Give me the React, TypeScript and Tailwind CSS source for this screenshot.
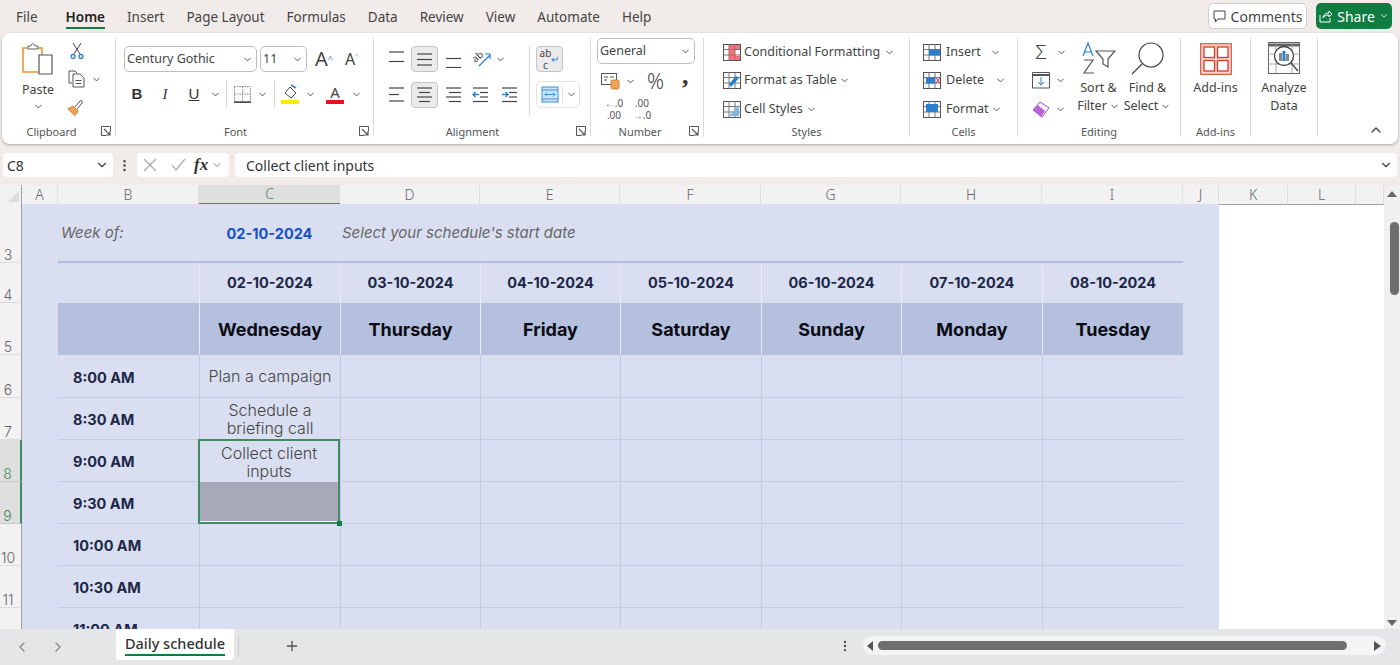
import type { ReactNode } from "react";
import { ChevronDown, ChevronLeft, ChevronRight, ChevronUp, MoreVertical, Plus } from "lucide-react";

const TABS = ["File", "Home", "Insert", "Page Layout", "Formulas", "Data", "Review", "View", "Automate", "Help"];
const DATES = ["02-10-2024", "03-10-2024", "04-10-2024", "05-10-2024", "06-10-2024", "07-10-2024", "08-10-2024"];
const DAYS = ["Wednesday", "Thursday", "Friday", "Saturday", "Sunday", "Monday", "Tuesday"];
const COLS = ["A", "B", "C", "D", "E", "F", "G", "H", "I", "J", "K", "L", ""];
const TIMES = [
  { row: 6, time: "8:00 AM", text: "Plan a campaign", h: "h-[43px]" },
  { row: 7, time: "8:30 AM", text: "Schedule a briefing call", h: "h-[42px]" },
  { row: 8, time: "9:00 AM", text: "", h: "h-[42px]" },
  { row: 9, time: "9:30 AM", text: "", h: "h-[42px]" },
  { row: 10, time: "10:00 AM", text: "", h: "h-[42px]" },
  { row: 11, time: "10:30 AM", text: "", h: "h-[42px]" },
  { row: 12, time: "11:00 AM", text: "", h: "h-[42px]" },
];

const gridCols =
  "grid grid-cols-[22px_36px_141px_141px_140px_140px_141px_140px_141px_141px_36px_69px_68px_28px]";
const gothic = "font-['Inter','Liberation_Sans',sans-serif]";

function Chev({ className = "" }: { className?: string }) {
  return <ChevronDown size={11} strokeWidth={2} className={`text-[#444] shrink-0 ${className}`} />;
}

function Launcher() {
  return (
    <svg width="10" height="10" viewBox="0 0 10 10" className="absolute right-[4px] bottom-[1px]" fill="none" stroke="#555">
      <path d="M9.5 5V.5H.5v9H5" />
      <path d="M3 3l5.5 5.5M9 5v4H5" strokeWidth="1.2" />
    </svg>
  );
}

function Group({ label, w, pad = "", children }: { label: string; w: string; pad?: string; children: ReactNode }) {
  return (
    <div className={`relative flex flex-col h-[99px] shrink-0 border-r border-[#dcdcdc] ${w}`}>
      <div className="h-[86px] shrink-0">{children}</div>
      <div className={`text-center text-[11px] leading-[16px] text-[#555] ${pad}`}>{label}</div>
    </div>
  );
}

function Lines({ rows, box = false, arrow }: { rows: string[]; box?: boolean; arrow?: string }) {
  return (
    <span className={`flex h-[26px] w-[27px] shrink-0 items-center justify-center rounded-[4px] ${box ? "border border-[#c4c4c4] bg-[#ebebeb]" : ""}`}>
      <svg width="17" height="17" viewBox="0 0 17 17" fill="none" stroke="#444" strokeWidth="1.2">
        {rows.map((d) => (
          <path key={d} d={d} />
        ))}
        {arrow && <path d={arrow} stroke="#2a7fd0" strokeWidth="1.4" />}
      </svg>
    </span>
  );
}

function GridIcon({ children }: { children?: ReactNode }) {
  return (
    <svg width="18" height="17" viewBox="0 0 18 17" fill="none" className="shrink-0">
      <rect x=".5" y=".5" width="17" height="16" stroke="#555" />
      <path d="M.5 5.500h17M.5 11h17M6 .5v16M12 .5v16" stroke="#777" />
      {children}
    </svg>
  );
}

function Paste() {
  return (
    <svg width="32" height="33" viewBox="0 0 32 33" fill="none">
      <path d="M1 5h19v24H1z" fill="#fff" stroke="#e8963c" strokeWidth="1.6" />
      <path d="M6 6V3h3c0-3 4-3 4 0h3v3z" fill="#fff" stroke="#666" />
      <path d="M17 12h13v19H17z" fill="#fff" stroke="#555" strokeWidth="1.2" />
    </svg>
  );
}

function Scissors() {
  return (
    <svg width="14" height="18" viewBox="0 0 14 18" fill="none" stroke="#444">
      <path d="M3 1l7 11M11 1L4 12" />
      <circle cx="3" cy="14.5" r="2" stroke="#2a7fd0" strokeWidth="1.3" />
      <circle cx="11" cy="14.5" r="2" stroke="#2a7fd0" strokeWidth="1.3" />
    </svg>
  );
}

function Copy() {
  return (
    <svg width="18" height="18" viewBox="0 0 18 18" fill="none" stroke="#555">
      <path d="M4 13H1V1h6l2 2" />
      <path d="M5 4h7l4 4v9H5z" fill="#fff" />
      <path d="M7.5 10.5h6M7.5 13.5h6" />
    </svg>
  );
}

function Brush() {
  return (
    <svg width="18" height="17" viewBox="0 0 18 17" fill="none">
      <path d="M1 10l5-3 5 5-3 4.500z" fill="#eda35a" stroke="#d97a20" />
      <path d="M8 8l5-6c2-1 3 0 2 2l-5 6" fill="#fff" stroke="#555" />
    </svg>
  );
}

function FontSelect({ w, text }: { w: string; text: string }) {
  return (
    <div className={`flex h-[26px] items-center justify-between rounded-[5px] border border-[#bdbdbd] bg-white pl-[2px] pr-[3px] text-[12.5px] text-[#444] ${w}`}>
      <span>{text}</span>
      <Chev />
    </div>
  );
}

function TextLine({ icon, text }: { icon: ReactNode; text: ReactNode }) {
  return (
    <div className="flex h-[28.5px] items-center text-[12.5px] text-[#444]">
      {icon}
      {text}
    </div>
  );
}

function Ribbon() {
  return (
    <div className="mx-[2px] flex h-[111px] rounded-[8px] bg-white pt-[5px] shadow-[0_1px_3px_rgba(0,0,0,0.3)]">
      <Group label="Clipboard" w="w-[114px]" pad="pr-[14px]">
        <div className="flex">
          <div className="ml-[15px] flex w-[42px] flex-col items-center pt-[5px]">
            <Paste />
            <span className="mt-[5px] text-[12.5px] leading-[18px] text-[#444]">Paste</span>
            <ChevronDown size={11} className="mt-[2px] text-[#444]" />
          </div>
          <div className="ml-[7px] -mt-[1px] flex flex-col">
            <div className="flex h-[28px] w-[40px] items-center pl-[4px]"><Scissors /></div>
            <div className="flex h-[28px] items-center gap-[5px] pl-[2px]"><Copy /><Chev /></div>
            <div className="flex h-[28px] items-center pl-[1px]"><Brush /></div>
          </div>
        </div>
        <Launcher />
      </Group>

      <Group label="Font" w="w-[258px]" pad="pr-[18px]">
        <div className="flex items-center pl-[8px] pt-[8px]">
          <FontSelect w="w-[133px]" text="Century Gothic" />
          <div className="ml-[3px]"><FontSelect w="w-[47px]" text="11" /></div>
          <span className="ml-[8px] w-[30px] text-[20px] leading-[26px] text-[#444]">A<sup className="text-[9px] text-[#2a7fd0]">^</sup></span>
          <span className="w-[20px] text-[16px] leading-[26px] text-[#444]">A<sup className="text-[9px] text-[#2a7fd0]">˅</sup></span>
        </div>
        <div className="mt-[9px] flex h-[26px] items-center text-[15px] text-[#333]">
          <span className="ml-[7px] w-[28px] shrink-0 text-center font-['Liberation_Sans',sans-serif] font-bold">B</span>
          <span className="w-[28px] shrink-0 text-center font-['Liberation_Serif',serif] italic">I</span>
          <span className="ml-[1px] w-[28px] shrink-0 text-center font-['Liberation_Sans',sans-serif] underline">U</span>
          <Chev className="ml-[2px]" />
          <span className="ml-[5px] h-[26px] w-[1px] shrink-0 bg-[#d5d5d5]" />
          <svg width="17" height="17" viewBox="0 0 17 17" fill="none" className="ml-[7px] shrink-0">
            <path d="M.5.5h16v15H.5zM8.500.5v15M.5 8h16" stroke="#888" strokeDasharray="1.500 1" />
            <path d="M0 16.200h17" stroke="#444" strokeWidth="1.500" />
          </svg>
          <Chev className="ml-[6px]" />
          <span className="ml-[6px] h-[26px] w-[1px] shrink-0 bg-[#d5d5d5]" />
          <svg width="18" height="20" viewBox="0 0 18 20" fill="none" className="ml-[6px] shrink-0">
            <path d="M4 9l5-6 6 6-5 5z" stroke="#444" />
            <path d="M10 1l5 3" stroke="#2a7fd0" strokeWidth="1.500" />
            <rect y="16" width="18" height="4" fill="#ffeb00" />
          </svg>
          <Chev className="ml-[6px]" />
          <span className="ml-[10px] flex w-[18px] shrink-0 flex-col items-center text-[15px] leading-[15px] text-[#444]">
            A
            <span className="h-[4px] w-[18px] bg-[#e81123]" />
          </span>
          <Chev className="ml-[7px]" />
        </div>
        <Launcher />
      </Group>

      <Group label="Alignment" w="w-[217px]" pad="pr-[19px]">
        <div className="flex pl-[9px] pt-[8px]">
          <div className="flex w-[146px] shrink-0 flex-col gap-[9px]">
            <div className="flex h-[26px] items-center">
              <Lines rows={["M1 1h15", "M1 10.500h15"]} />
              <span className="ml-[1px]"><Lines box rows={["M1 3h15", "M1 8.500h15", "M1 14h15"]} /></span>
              <span className="ml-[2px]"><Lines rows={["M1 7.500h15", "M1 16.500h15"]} /></span>
              <svg width="20" height="20" viewBox="0 0 20 20" fill="none" className="ml-[5px] shrink-0 overflow-visible">
                <text x="1" y="12" fontSize="10" fill="#444" transform="rotate(-40 5 10)" fontFamily="Noto Sans">ab</text>
                <path d="M7 17L18 6M13 5h5v5" stroke="#2a7fd0" strokeWidth="1.200" />
              </svg>
              <Chev className="ml-[3px]" />
            </div>
            <div className="flex h-[27px] items-center">
              <Lines rows={["M1 2h15", "M1 8.500h10", "M1 15h15"]} />
              <span className="ml-[1px]"><Lines box rows={["M1 2h15", "M3 6.500h11", "M1 11h15", "M3 15.500h11"]} /></span>
              <span className="ml-[2px]"><Lines rows={["M1 2h15", "M4 6.500h12", "M1 11h15", "M4 15.500h12"]} /></span>
              <Lines rows={["M1 2h15", "M8 6.500h8", "M8 11h8", "M1 15.500h15"]} arrow="M7 8.500H1M3.500 6L1 8.500 3.500 11" />
              <span className="ml-[2px]"><Lines rows={["M1 2h15", "M8 6.500h8", "M8 11h8", "M1 15.500h15"]} arrow="M1 8.500h6M4.500 6L7 8.500 4.500 11" /></span>
            </div>
          </div>
          <span className="h-[69px] w-[1px] shrink-0 bg-[#d5d5d5]" />
          <div className="ml-[6px] flex flex-col">
            <span className="flex h-[26px] w-[27px] items-center justify-center rounded-[4px] border border-[#c4c4c4] bg-[#ebebeb] text-center text-[10px] leading-[12px] text-[#444]">ab<br />c<span className="text-[#2a7fd0]">↵</span></span>
            <div className="mt-[9px] flex h-[27px] w-[44px] items-center rounded-[5px] border border-[#e2e2e2]">
              <span className="flex w-[26px] justify-center border-r border-[#e2e2e2]">
                <svg width="18" height="17" viewBox="0 0 18 17" fill="#cfe4f7" stroke="#3a8fdc"><rect x="1" y="1" width="16" height="15" /><path d="M1 4h16M1 13h16M4 8.500h10M6 6.500l-2 2 2 2M12 6.500l2 2-2 2" fill="none" /></svg>
              </span>
              <Chev className="ml-[3px]" />
            </div>
          </div>
        </div>
        <Launcher />
      </Group>

      <Group label="Number" w="w-[113px]" pad="pr-[14px]">
        <div className="pl-[6px]">
          <div className="flex h-[26px] w-[98px] items-center justify-between rounded-[5px] border border-[#bdbdbd] pl-[2px] pr-[3px] text-[12.5px] text-[#444]">General<Chev /></div>
          <div className="mt-[3px] flex h-[28px] items-center">
            <svg width="20" height="18" viewBox="0 0 20 18" fill="none" className="ml-[4px]"><rect x=".5" y="1.500" width="15" height="11" stroke="#555" /><path d="M3 5h4M3 8h3M9 5h4" stroke="#555" /><rect x="10" y="8" width="8" height="9" rx="2" fill="#f0a35a" stroke="#d97a20" /></svg>
            <Chev className="ml-[4px]" />
            <span className="ml-[11px] w-[20px] text-[21px] font-light leading-[24px] text-[#444]">%</span>
            <span className="ml-[15px] -mt-[10px] font-['Liberation_Serif',serif] text-[26px] font-bold leading-[24px] text-[#333]">,</span>
          </div>
          <div className="flex h-[28px] items-center text-[10px] leading-[12px] text-[#555]">
            <span className="ml-[3px] w-[28px] text-center"><span className="text-[#2a7fd0]">←</span>.0<br />.00</span>
            <span className="w-[28px] text-center">.00<br /><span className="text-[#2a7fd0]">→</span>.0</span>
          </div>
        </div>
        <Launcher />
      </Group>

      <Group label="Styles" w="w-[206px]">
        <div className="pl-[19px]">
          <TextLine icon={<span className="mr-[3px] flex"><GridIcon><path d="M6 1h11v4H12v7h5v4H6z" fill="#e8505b" opacity=".8" /></GridIcon></span>} text={<>Conditional Formatting<Chev className="ml-[4px]" /></>} />
          <TextLine icon={<span className="mr-[3px] flex"><GridIcon><path d="M8 15l8-9-3-2-7 8z" fill="#2a7fd0" /></GridIcon></span>} text={<>Format as Table<Chev className="ml-[2px]" /></>} />
          <TextLine icon={<span className="mr-[3px] flex"><GridIcon><path d="M6 15l10-11v11z" fill="#7fb4e6" /></GridIcon></span>} text={<>Cell Styles<Chev className="ml-[3px]" /></>} />
        </div>
      </Group>

      <Group label="Cells" w="w-[108px]">
        <div className="pl-[13px]">
          <TextLine icon={<GridIcon><path d="M6 5.500h11v6H6z" fill="#2a7fd0" /></GridIcon>} text={<span className="ml-[5px] flex w-[55px] items-center justify-between">Insert<Chev /></span>} />
          <TextLine icon={<GridIcon><path d="M3 5.500h9v6H3z" fill="#2a7fd0" /><path d="M13 6l4 5M17 6l-4 5" stroke="#e81123" /></GridIcon>} text={<span className="ml-[5px] flex w-[60px] items-center justify-between">Delete<Chev /></span>} />
          <TextLine icon={<GridIcon><path d="M3 3h12v8H3z" fill="#2a7fd0" /></GridIcon>} text={<span className="ml-[5px] flex items-center gap-[3px]">Format<Chev /></span>} />
        </div>
      </Group>

      <Group label="Editing" w="w-[163px]">
        <div className="flex">
          <div className="ml-[13px] flex w-[40px] flex-col">
            <div className="flex h-[28.5px] items-center gap-[5px]">
              <span className="w-[20px] text-center text-[20px] font-light leading-[20px] text-[#444]">Σ</span>
              <Chev />
            </div>
            <div className="flex h-[28.5px] items-center gap-[5px]">
              <svg width="18" height="17" viewBox="0 0 18 17" fill="none" className="ml-[1px]"><path d="M.5 3.500V16h17V.5H.5z" stroke="#555" /><path d="M.5 3h17" stroke="#555" strokeWidth="2" /><path d="M9 5v8M6 10l3 3 3-3" stroke="#2a7fd0" /></svg>
              <Chev />
            </div>
            <div className="flex h-[28.5px] items-center gap-[5px]">
              <svg width="18" height="17" viewBox="0 0 18 17" fill="none" className="ml-[1px]"><path d="M1 9l7-8 9 6-7 9z" fill="#fff" stroke="#a349c4" /><path d="M1 9l5-5 7 6-4 6z" fill="#b964d6" /></svg>
              <Chev />
            </div>
          </div>
          <div className="flex w-[55px] flex-col items-center pt-[4px] text-[12.5px] leading-[18px] text-[#444]">
            <svg width="34" height="33" viewBox="0 0 34 33" fill="none">
              <path d="M1 14l5-13 5 13M3 10h6" stroke="#2a7fd0" strokeWidth="1.200" />
              <path d="M2 18h9L2 31h10" stroke="#555" strokeWidth="1.200" />
              <path d="M14 9h19l-7 8v8l-5-3v-5z" stroke="#555" strokeWidth="1.200" />
            </svg>
            <span className="mt-[4px]">Sort &amp;</span>
            <span className="flex items-center gap-[2px]">Filter<Chev /></span>
          </div>
          <div className="ml-[-6px] flex w-[55px] flex-col items-center pt-[4px] text-[12.5px] leading-[18px] text-[#444]">
            <svg width="33" height="33" viewBox="0 0 33 33" fill="none" stroke="#444" strokeWidth="1.200">
              <circle cx="20" cy="13" r="12" />
              <path d="M11 22L1 32" />
            </svg>
            <span className="mt-[4px]">Find &amp;</span>
            <span className="flex items-center gap-[2px]">Select<Chev /></span>
          </div>
        </div>
      </Group>

      <Group label="Add-ins" w="w-[70px]">
        <div className="flex flex-col items-center pt-[5px] text-[12.5px] leading-[18px] text-[#444]">
          <svg width="32" height="32" viewBox="0 0 32 32" fill="#fde8e4" stroke="#d83b27" strokeWidth="1.300">
            <rect x=".7" y=".7" width="30.600" height="30.600" fill="#f8d5ce" strokeWidth="1" />
            <rect x="4" y="4" width="10.500" height="10.500" fill="#fff" />
            <rect x="17.500" y="4" width="10.500" height="10.500" fill="#fff" />
            <rect x="4" y="17.500" width="10.500" height="10.500" fill="#fff" />
            <rect x="17.500" y="17.500" width="10.500" height="10.500" fill="#fff" />
          </svg>
          <span className="mt-[4px]">Add-ins</span>
        </div>
      </Group>

      <Group label="" w="w-[67px]">
        <div className="flex flex-col items-center pt-[4px] text-[12.5px] leading-[18px] text-[#444]">
          <svg width="32" height="32" viewBox="0 0 32 32" fill="none" stroke="#666">
            <rect x=".5" y=".5" width="31" height="31" />
            <path d="M.5 3h31" strokeWidth="3" />
            <path d="M.5 12h31M.5 22h31M8 3v28M24 3v28" stroke="#aaa" />
            <circle cx="16" cy="14" r="9.500" fill="#fff" stroke="#444" strokeWidth="1.300" />
            <path d="M11 11h3v8h-3z" fill="#888" stroke="none" />
            <path d="M14.500 9h3v10h-3z" fill="#2a7fd0" stroke="none" />
            <path d="M18 12h3v7h-3z" fill="#888" stroke="none" />
            <path d="M23 21l7 8" stroke="#444" strokeWidth="1.300" />
          </svg>
          <span className="mt-[5px]">Analyze</span>
          <span>Data</span>
        </div>
      </Group>

      <div className="flex flex-1 items-end justify-end pb-[6px] pr-[14px]">
        <ChevronUp size={16} className="text-[#444]" />
      </div>
    </div>
  );
}

function RowNum({ n, h, active }: { n: number | string; h: string; active?: boolean }) {
  return (
    <div
      className={`flex items-end justify-center pr-[5px] text-[14px] font-light leading-[15px] ${h} ${
        active
          ? "border-r-2 border-b border-b-[#c9c9c9] border-r-[#3f8a5e] bg-[#dfdfdf] text-[#3f8a5e]"
          : "border-r border-b border-b-[#dcdcdc] border-r-[#a0a0a0] bg-[#f2f2f2] text-[#666]"
      }`}
    >
      {n}
    </div>
  );
}

function Sheet() {
  return (
    <div className="relative flex h-[444px] overflow-hidden">
      <div className="flex-1 overflow-hidden">
        <div className={`${gridCols} h-[19px]`}>
          <div className="flex items-end justify-end border-b border-r border-[#a0a0a0] bg-[#f2f2f2]">
            <span className="mb-[2px] mr-[2px] h-0 w-0 border-b-[11px] border-l-[11px] border-b-[#dcdcdc] border-l-transparent" />
          </div>
          {COLS.map((c, i) => (
            <div
              key={i}
              className={`flex items-center justify-center text-[14px] font-light leading-[18px] ${
                c === "C"
                  ? "border-b-2 border-b-[#3f8a5e] bg-[#dfdfdf] text-[#3f8a5e]"
                  : "border-b border-r border-b-[#a0a0a0] border-r-[#e0e0e0] bg-[#f2f2f2] text-[#666]"
              }`}
            >
              {c}
            </div>
          ))}
        </div>

        <div className={`${gridCols} bg-white ${gothic}`}>
          <RowNum n={3} h="h-[59px]" />
          <div className="bg-[#d9dff0]" />
          <div className="flex items-center border-b-2 border-b-[#b2bedd] bg-[#d9dff0] pl-[3px] pt-[2px] text-[15px] italic text-[#666]">Week of:</div>
          <div className="flex items-center justify-center border-b-2 border-b-[#b2bedd] bg-[#d9dff0] pt-[2px] text-[14.5px] font-bold text-[#1450c8]">02-10-2024</div>
          <div className="col-span-6 flex items-center border-b-2 border-b-[#b2bedd] bg-[#d9dff0] pl-[2px] pt-[2px] text-[15px] italic text-[#666]">
            Select your schedule's start date
          </div>
          <div className="bg-[#d9dff0]" />
          <div className="col-span-3" />

          <RowNum n={4} h="h-[40px]" />
          <div className="bg-[#d9dff0]" />
          <div className="bg-[#d9dff0]" />
          {DATES.map((d) => (
            <div key={d} className="flex items-center justify-center border-l border-[#e8ebf6] bg-[#d9dff0] text-[14.5px] font-bold text-[#1c2748]">{d}</div>
          ))}
          <div className="bg-[#d9dff0]" />
          <div className="col-span-3" />

          <RowNum n={5} h="h-[52px]" />
          <div className="bg-[#d9dff0]" />
          <div className="bg-[#b4c0de]" />
          {DAYS.map((d) => (
            <div key={d} className="flex items-center justify-center border-l border-[#e8ebf6] bg-[#b4c0de] text-[18px] font-bold text-[#0c0c14]">{d}</div>
          ))}
          <div className="bg-[#d9dff0]" />
          <div className="col-span-3" />

          {TIMES.map((t) => (
            <div key={t.row} className="contents">
              <RowNum n={t.row === 12 ? "" : t.row} h={t.h} active={t.row === 8 || t.row === 9} />
              <div className="bg-[#d9dff0]" />
              <div className="flex items-center border-b border-b-[#c3cbe4] bg-[#d9dff0] pl-[15px] pt-[3px] text-[14.5px] font-bold text-[#1c2748]">{t.time}</div>
              {t.row === 8 ? (
                <div className="relative -ml-[1px] -mt-[1px] row-span-2 flex flex-col border-2 border-[#3f8a5e] bg-[#d9dff0]">
                  <div className="flex h-[41px] items-center justify-center text-center text-[16px] font-light leading-[18px] text-[#444]">
                    Collect client<br />inputs
                  </div>
                  <div className="flex-1 border-b border-white bg-[#a7abb9]" />
                  <span className="absolute -bottom-[4px] -right-[4px] h-[5px] w-[5px] bg-[#107c41]" />
                </div>
              ) : t.row === 9 ? null : (
                <div className="flex items-center justify-center border-b border-l border-[#c3cbe4] bg-[#d9dff0] px-[4px] text-center text-[16px] font-light leading-[18px] text-[#444]">
                  {t.text}
                </div>
              )}
              {[0, 1, 2, 3, 4, 5].map((i) => (
                <div key={i} className="border-b border-l border-[#c3cbe4] bg-[#d9dff0]" />
              ))}
              <div className="bg-[#d9dff0]" />
              <div className="col-span-3" />
            </div>
          ))}
        </div>
      </div>

      <div className="relative flex w-[16px] flex-col items-center justify-between rounded-l-[6px] bg-[#f0f0f0] pb-[3px] pt-[6px]">
        <span className="h-0 w-0 border-x-[5px] border-b-[6px] border-x-transparent border-b-[#666]" />
        <span className="absolute left-[6px] top-[37px] h-[73px] w-[9px] rounded-full bg-[#6e6e6e]" />
        <span className="h-0 w-0 border-x-[5px] border-t-[6px] border-x-transparent border-t-[#666]" />
      </div>
    </div>
  );
}

export default function App() {
  return (
    <div className="flex h-[665px] w-[1400px] flex-col overflow-hidden bg-[#f1ece9] font-['Noto_Sans',sans-serif]">
      <div className="flex h-[33px] shrink-0 items-start">
        <nav className="flex gap-[22px] pl-[16px] pt-[7px] text-[13.5px] leading-[20px] text-[#444]">
          {TABS.map((t) => (
            <span key={t} className={t === "Home" ? "ml-[6px] border-b-2 border-[#107c41] font-semibold text-[#222]" : ""}>{t}</span>
          ))}
        </nav>
        <div className="ml-auto mr-[8px] mt-[3px] flex items-center gap-[9px] text-[14px]">
          <button type="button" className="flex h-[26px] w-[99px] items-center justify-center gap-[5px] rounded-[5px] border border-[#cfcfcf] bg-white text-[#444]">
            <svg width="13" height="13" viewBox="0 0 13 13" fill="none" stroke="#444"><path d="M1 1h11v8H5l-2.500 3V9H1z" /></svg>
            Comments
          </button>
          <button type="button" className="flex h-[26px] w-[76px] items-center justify-center gap-[4px] rounded-[5px] bg-[#107c41] text-white">
            <svg width="14" height="13" viewBox="0 0 14 13" fill="none" stroke="#fff"><path d="M1 5v7h10V8M4 8c0-3 3-5 6-5V1l3 3-3 3V5c-3 0-5 1-6 3z" /></svg>
            Share
            <ChevronDown size={10} />
          </button>
        </div>
      </div>

      <Ribbon />

      <div className="mt-[9px] flex h-[24px] shrink-0 items-center text-[14px] text-[#333]">
        <div className="ml-[3px] flex h-[24px] w-[110px] items-center justify-between rounded-[4px] bg-white pl-[4px] pr-[4px]">
          C8
          <ChevronDown size={14} className="text-[#444]" />
        </div>
        <MoreVertical size={15} className="ml-[4px] text-[#444]" />
        <div className="ml-[5px] flex h-[24px] w-[92px] items-center rounded-[4px] bg-white pl-[5px] text-[#999]">
          <svg width="44" height="14" viewBox="0 0 44 14" fill="none" stroke="#aaa" strokeWidth="1.200"><path d="M2 1l12 12M14 1L2 13M30 7l4 5 9-11" /></svg>
          <span className="ml-[8px] font-['Liberation_Serif',serif] text-[17px] font-bold italic text-[#333]">fx</span>
          <ChevronDown size={12} className="ml-[3px] text-[#888]" />
        </div>
        <div className="ml-[6px] mr-[3px] flex h-[24px] flex-1 items-center justify-between rounded-[4px] bg-white pl-[11px] pr-[4px]">
          Collect client inputs
          <ChevronDown size={14} className="text-[#444]" />
        </div>
      </div>

      <div className="mt-[8px] shrink-0"><Sheet /></div>

      <div className="relative flex h-[36px] shrink-0 items-start bg-[#e4e6e8] text-[#888]">
        <ChevronLeft size={16} className="ml-[14px] mt-[10px]" />
        <ChevronRight size={16} className="ml-[20px] mt-[10px]" />
        <div className="ml-[50px] flex h-[31px] w-[118px] flex-col items-center rounded-b-[4px] bg-white text-[14.5px] font-medium text-[#333]">
          <span className="mt-[4px] border-b-2 border-[#107c41] leading-[21px]">Daily schedule</span>
        </div>
        <span className="ml-[4px] mt-[8px] h-[18px] w-[1px] bg-[#cdcdcd]" />
        <Plus size={16} className="ml-[45px] mt-[9px] text-[#555]" />
        <MoreVertical size={14} className="ml-[538px] mt-[10px] text-[#444]" />
        <div className="ml-[11px] mt-[7px] flex h-[19px] w-[523px] items-center rounded-full bg-[#f4f4f4] pl-[4px] pr-[5px]">
          <span className="h-0 w-0 border-y-[5px] border-r-[6px] border-y-transparent border-r-[#555]" />
          <span className="ml-[5px] h-[9px] w-[469px] rounded-full bg-[#6e6e6e]" />
          <span className="ml-auto h-0 w-0 border-y-[5px] border-l-[7px] border-y-transparent border-l-[#555]" />
        </div>
      </div>
    </div>
  );
}
